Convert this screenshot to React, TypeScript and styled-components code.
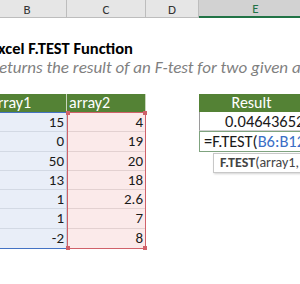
import React from "react";
import styled, { createGlobalStyle } from "styled-components";

const GlobalStyle = createGlobalStyle`
  html, body { margin: 0; padding: 0; background: #ffffff; }
  body { overflow: hidden; }
`;

const FONT = `Carlito, Lato, "Open Sans", "Liberation Sans", sans-serif`;

const Sheet = styled.div`
  width: 300px;
  height: 284px;
  overflow: hidden;
  background: #ffffff;
  font-family: ${FONT};
`;

const Canvas = styled.div`
  margin-left: -12px;
  width: 330px;
`;

const COLS = "79px 79px 53px 114px";

const ColHeaderRow = styled.div`
  display: grid;
  grid-template-columns: ${COLS};
  height: 18px;
`;

const ColHeader = styled.div<{ $selected?: boolean }>`
  box-sizing: border-box;
  display: flex;
  align-items: center;
  justify-content: center;
  background: ${(p) => (p.$selected ? "#d2d2d2" : "#e6e6e6")};
  border-right: 1px solid #bdbdbd;
  border-bottom: ${(p) => (p.$selected ? "2px solid #217346" : "1px solid #bdbdbd")};
  color: ${(p) => (p.$selected ? "#217346" : "#333333")};
  font-size: 13px;
  line-height: 1;
  padding-top: 1px;
`;

const TitleBlock = styled.div`
  padding: 21px 0 0 2px;
  height: 76px;
  box-sizing: border-box;
`;

const Title = styled.div`
  font-family: Carlito, "Liberation Sans Narrow", Lato, sans-serif;
  font-weight: 700;
  font-size: 16.5px;
  color: #000000;
  line-height: 19px;
`;

const Subtitle = styled.div`
  font-style: italic;
  font-size: 17px;
  color: #7f7f7f;
  line-height: 19px;
  white-space: nowrap;
`;

const Tables = styled.div`
  display: grid;
  grid-template-columns: ${COLS};
`;

const DataCol = styled.div`
  display: flex;
  flex-direction: column;
`;

const HeadCell = styled.div<{ $center?: boolean }>`
  box-sizing: border-box;
  height: 18px;
  background: #548235;
  color: #ffffff;
  font-size: 16px;
  line-height: 18px;
  padding: ${(p) => (p.$center ? "0 8px 0 0" : "0 2px")};
  text-align: ${(p) => (p.$center ? "center" : "left")};
  border-right: 1px solid #c9d6bd;
`;

const Range = styled.div<{ $tone: "blue" | "red" }>`
  position: relative;
  box-sizing: border-box;
  background: ${(p) => (p.$tone === "blue" ? "#e9eef8" : "#fbeaea")};
  border-top: 1px solid ${(p) => (p.$tone === "blue" ? "#4472c4" : "#d0616a")};
  border-bottom: 1px solid ${(p) => (p.$tone === "blue" ? "#4472c4" : "#d0616a")};
  border-left: ${(p) => (p.$tone === "red" ? "1px solid #d0616a" : "none")};
  border-right: ${(p) => (p.$tone === "red" ? "1px solid #d0616a" : "1px solid #c8cfdc")};
`;

const NumCell = styled.div<{ $tone: "blue" | "red" }>`
  box-sizing: border-box;
  height: 19.3px;
  text-align: right;
  padding-right: 2px;
  font-size: 15px;
  line-height: 19px;
  color: #1a1a1a;
  border-bottom: 1px solid ${(p) => (p.$tone === "blue" ? "#d3d9e4" : "#e3d1d1")};
  &:last-child { border-bottom: none; }
`;

const Handle = styled.span<{ $pos: "tl" | "tr" | "bl" | "br" }>`
  position: absolute;
  width: 4px;
  height: 4px;
  background: #d0616a;
  ${(p) => (p.$pos[0] === "t" ? "top: -2px;" : "bottom: -2px;")}
  ${(p) => (p.$pos[1] === "l" ? "left: -2px;" : "right: -2px;")}
`;

const Spacer = styled.div``;

const ResultValue = styled.div`
  box-sizing: border-box;
  height: 19px;
  border-left: 1px solid #9a9a9a;
  border-bottom: 1px solid #d0d0d0;
  font-size: 16.5px;
  line-height: 19px;
  color: #1a1a1a;
  padding-left: 25px;
  white-space: nowrap;
`;

const EditCell = styled.div`
  position: relative;
  box-sizing: border-box;
  height: 21px;
  border: 1px solid #7fa37f;
  font-size: 16.5px;
  line-height: 19px;
  color: #1a1a1a;
  padding-left: 4px;
  white-space: nowrap;
`;

const Ref = styled.span`
  color: #3a6ec6;
`;

const Tip = styled.div`
  position: absolute;
  left: 13px;
  top: 21px;
  height: 20px;
  box-sizing: border-box;
  padding: 0 6px;
  background: #ffffff;
  border: 1px solid #c8c8c8;
  box-shadow: 1px 1px 2px rgba(0, 0, 0, 0.18);
  font-size: 14px;
  line-height: 18px;
  color: #444444;
  white-space: nowrap;
`;

const a1 = ["15", "0", "50", "13", "1", "1", "-2"];
const a2 = ["4", "19", "20", "18", "2.6", "7", "8"];

export default function App() {
  return (
    <Sheet>
      <GlobalStyle />
      <Canvas>
        <ColHeaderRow>
          <ColHeader>B</ColHeader>
          <ColHeader>C</ColHeader>
          <ColHeader>D</ColHeader>
          <ColHeader $selected>E</ColHeader>
        </ColHeaderRow>
        <TitleBlock>
          <Title>Excel F.TEST Function</Title>
          <Subtitle>Returns the result of an F-test for two given arrays</Subtitle>
        </TitleBlock>
        <Tables>
          <DataCol>
            <HeadCell>array1</HeadCell>
            <Range $tone="blue">
              {a1.map((v, i) => (
                <NumCell key={i} $tone="blue">{v}</NumCell>
              ))}
            </Range>
          </DataCol>
          <DataCol>
            <HeadCell>array2</HeadCell>
            <Range $tone="red">
              <Handle $pos="tl" />
              <Handle $pos="tr" />
              <Handle $pos="bl" />
              <Handle $pos="br" />
              {a2.map((v, i) => (
                <NumCell key={i} $tone="red">{v}</NumCell>
              ))}
            </Range>
          </DataCol>
          <Spacer />
          <DataCol>
            <HeadCell $center>Result</HeadCell>
            <ResultValue>0.046436524</ResultValue>
            <EditCell>
              =F.TEST(<Ref>B6:B12</Ref>,C6:C12)
              <Tip>
                <b>F.TEST</b>(array1, array2)
              </Tip>
            </EditCell>
          </DataCol>
        </Tables>
      </Canvas>
    </Sheet>
  );
}
